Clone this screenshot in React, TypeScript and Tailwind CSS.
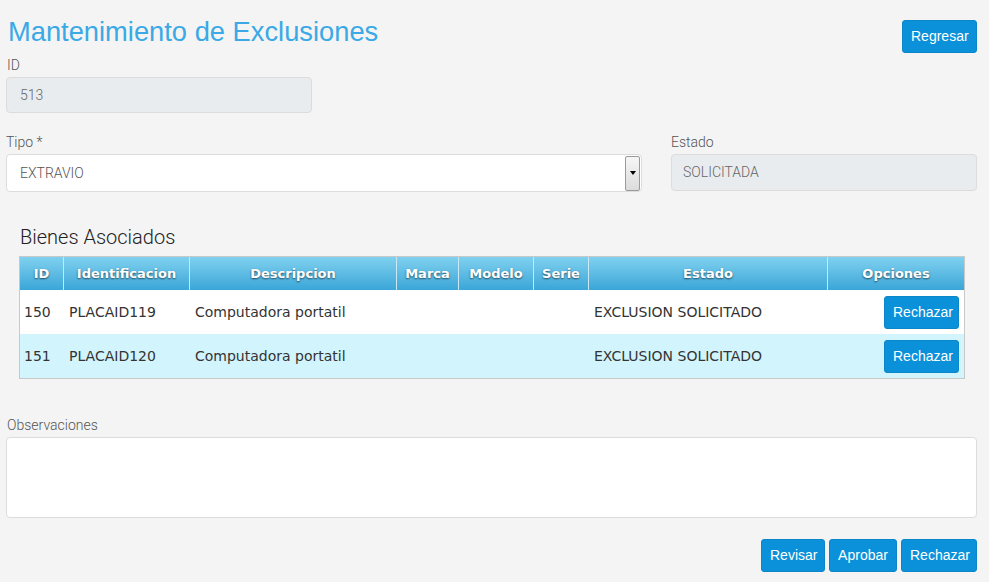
import React from "react";

const rows = [
  { id: "150", ident: "PLACAID119", desc: "Computadora portatil", estado: "EXCLUSION SOLICITADO", bg: "bg-white" },
  { id: "151", ident: "PLACAID120", desc: "Computadora portatil", estado: "EXCLUSION SOLICITADO", bg: "bg-[#d2f4fd]" },
];

const cols = [
  { label: "ID", w: "w-[44px]" },
  { label: "Identificacion", w: "w-[126px]" },
  { label: "Descripcion", w: "w-[207px]" },
  { label: "Marca", w: "w-[62px]" },
  { label: "Modelo", w: "w-[75px]" },
  { label: "Serie", w: "w-[55px]" },
  { label: "Estado", w: "w-[239px]" },
  { label: "Opciones", w: "w-[136px]" },
];

const btn =
  "rounded-[3px] bg-[#0b91d9] text-white text-[14px] font-['Liberation_Sans',Arial,sans-serif] h-[33px] px-[8px] border border-[#0a86c9]";

const label = "text-[14px] text-[#555] font-['Roboto','Liberation_Sans',sans-serif] font-light";

export default function App() {
  return (
    <div className="w-[989px] h-[582px] bg-[#f4f4f4] pl-[6px] pr-[12px] pt-[14px] overflow-hidden font-['Liberation_Sans',Arial,sans-serif]">
      <div className="flex justify-between items-start">
        <h1 className="text-[27.3px] leading-[36px] text-[#3aa9e6] pl-[2px] font-['Liberation_Sans',Arial,sans-serif]">
          Mantenimiento de Exclusiones
        </h1>
        <button className={`${btn} mt-[6px] w-[75px] px-0`}>Regresar</button>
      </div>
      <div className={`${label} mt-[2px] pl-[1px] leading-[20px]`}>ID</div>
      <div className="mt-[2px] w-[306px] h-[36px] rounded-[4px] border border-[#dcdcdc] bg-[#e9ecef] px-[13px] flex items-center text-[14px] text-[#666] font-['Roboto','Liberation_Sans',sans-serif] font-light">
        513
      </div>

      <div className="mt-[19px] flex">
        <div className="w-[636px]">
          <div className={`${label} leading-[20px]`}>Tipo *</div>
          <div className="mt-[2px] h-[38px] rounded-[4px] border border-[#dcdcdc] bg-white flex items-center pl-[13px] pr-[1px]">
            <span className="flex-1 text-[14px] text-[#555] font-['Roboto','Liberation_Sans',sans-serif] font-light">EXTRAVIO</span>
            <div className="w-[15px] h-[35px] border border-[#9a9a9a] rounded-[2px] bg-gradient-to-b from-[#f6f6f6] to-[#dcdcdc] flex items-center justify-center">
              <div className="w-0 h-0 border-l-[3px] border-r-[3px] border-t-[4px] border-l-transparent border-r-transparent border-t-black" />
            </div>
          </div>
        </div>
        <div className="ml-[29px] w-[306px]">
          <div className={`${label} leading-[20px]`}>Estado</div>
          <div className="mt-[2px] h-[37px] rounded-[4px] border border-[#dcdcdc] bg-[#e9ecef] px-[11px] flex items-center text-[14px] text-[#666] font-['Roboto','Liberation_Sans',sans-serif] font-light">
            SOLICITADA
          </div>
        </div>
      </div>

      <div className="mt-[32px] pl-[14px] text-[20px] leading-[26px] text-[#222] font-['Roboto','Liberation_Sans',sans-serif] font-light">
        Bienes Asociados
      </div>

      <div className="mt-[6px] ml-[13px] w-[946px] border border-[#c8c8c8] bg-white">
        <div className="flex h-[33px] bg-gradient-to-b from-[#7fd1ef] to-[#38a6d8]">
          {cols.map((c, i) => (
            <div
              key={c.label}
              className={`${c.w} ${i < cols.length - 1 ? "border-r border-[#c9e7f4]" : ""} flex items-center justify-center text-white font-bold text-[13px] font-['DejaVu_Sans',Verdana,sans-serif] [text-shadow:0_1px_2px_rgba(0,0,0,0.6)]`}
            >
              {c.label}
            </div>
          ))}
        </div>
        {rows.map((r) => (
          <div key={r.id} className={`flex h-[44px] items-center ${r.bg} text-[14px] text-[#333] font-['DejaVu_Sans',Verdana,sans-serif]`}>
            <div className="w-[44px] pl-[4px]">{r.id}</div>
            <div className="w-[126px] pl-[5px]">{r.ident}</div>
            <div className="w-[207px] pl-[5px]">{r.desc}</div>
            <div className="w-[62px]" />
            <div className="w-[75px]" />
            <div className="w-[55px]" />
            <div className="w-[239px] pl-[5px]">{r.estado}</div>
            <div className="w-[136px] flex justify-end pr-[5px]">
              <button className={`${btn} w-[75px] px-0`}>Rechazar</button>
            </div>
          </div>
        ))}
      </div>

      <div className={`${label} mt-[36px] pl-[1px] leading-[20px]`}>Observaciones</div>
      <div className="mt-[2px] h-[81px] rounded-[4px] border border-[#dcdcdc] bg-white" />

      <div className="mt-[21px] flex justify-end gap-[4px]">
        <button className={`${btn} w-[64px] px-0`}>Revisar</button>
        <button className={`${btn} w-[68px] px-0`}>Aprobar</button>
        <button className={`${btn} w-[76px] px-0`}>Rechazar</button>
      </div>
    </div>
  );
}
